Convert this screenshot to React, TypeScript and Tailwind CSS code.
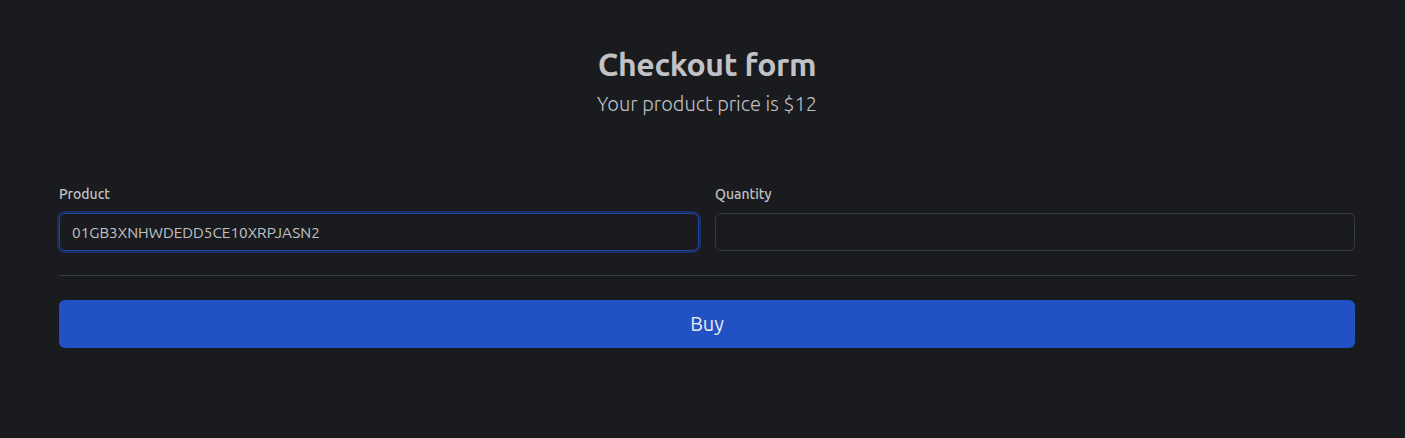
export default function App() {
  return (
    <main
      className="min-h-[438px] w-full bg-[#1a1b1e] text-[#c1c2c5]"
      style={{ fontFamily: "Ubuntu, 'Noto Sans', 'Open Sans', sans-serif" }}
    >
      <div className="ml-[59px] w-[1296px] pt-[44px]">
        <header className="flex flex-col items-center text-center">
          <h1 className="text-[32px] font-bold leading-[40px] tracking-[-0.01em]">Checkout form</h1>
          <p className="mt-[6px] text-[20px] font-light leading-[28px]">Your product price is $12</p>
        </header>

        <form className="mt-[66px]">
          <div className="grid grid-cols-2 gap-4">
            <label className="flex flex-col">
              <span className="mb-[9px] text-[14px] font-medium leading-[20px]">Product</span>
              <input
                readOnly
                value="01GB3XNHWDEDD5CE10XRPJASN2"
                className="h-[38px] rounded-[6px] border border-[#1e43a0] bg-[#1a1b1e] px-[12px] text-[15.3px] text-[#c1c2c5] outline-none shadow-[0_0_0_2px_#1b2d5c]"
                style={{ fontFamily: "inherit" }}
              />
            </label>
            <label className="flex flex-col">
              <span className="mb-[9px] text-[14px] font-medium leading-[20px]">Quantity</span>
              <input
                readOnly
                value=""
                className="h-[38px] rounded-[6px] border border-[#373a40] bg-[#1a1b1e] px-[12px] text-[15.3px] text-[#c1c2c5] outline-none"
                style={{ fontFamily: "inherit" }}
              />
            </label>
          </div>

          <div className="mt-[24px] h-px bg-[#373a40]" />

          <button
            type="button"
            className="mt-[24px] h-[48px] w-full rounded-[6px] bg-[#2251c4] text-[20px] text-[#e9ecef]"
            style={{ fontFamily: "inherit" }}
          >
            Buy
          </button>
        </form>
      </div>
    </main>
  );
}
